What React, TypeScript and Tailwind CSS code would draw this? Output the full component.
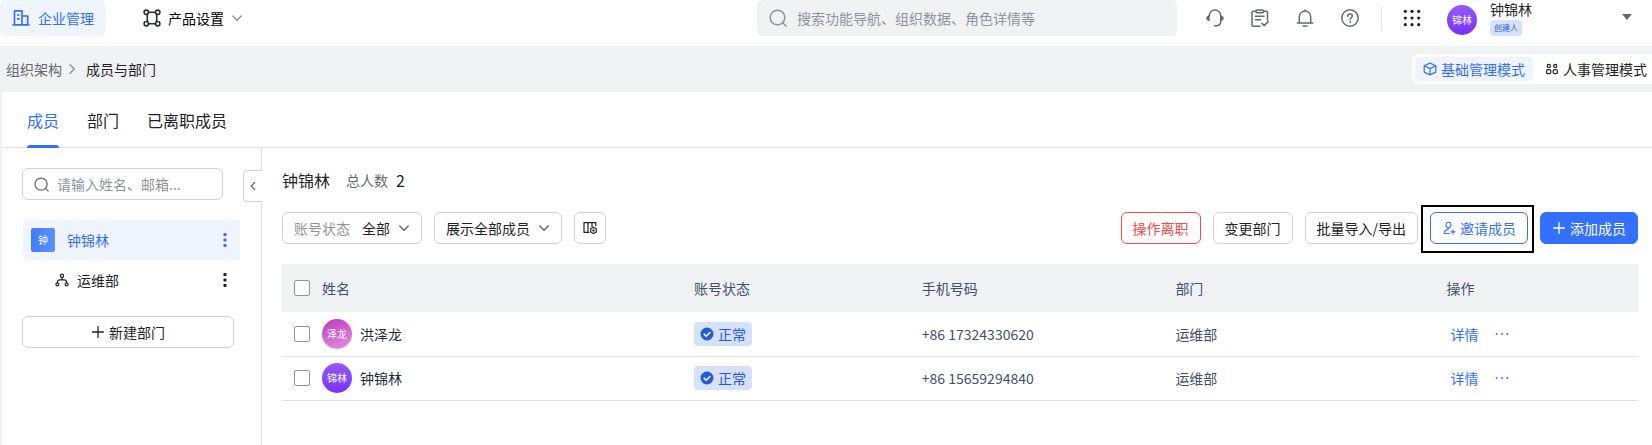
import React from "react";

type IconProps = { className?: string };

const Svg = ({ className, box = 18, width = 1.5, children }: IconProps & { box?: number; width?: number; children: React.ReactNode }) => (
  <svg
    aria-hidden="true"
    viewBox={`0 0 ${box} ${box}`}
    fill="none"
    stroke="currentColor"
    strokeWidth={width}
    strokeLinecap="round"
    strokeLinejoin="round"
    className={`shrink-0 ${className ?? ""}`}
  >
    {children}
  </svg>
);

const BuildingIcon = ({ className }: IconProps) => (
  <Svg className={className} width={1.7}>
    <path d="M.5 15.800h17M2.500 15.500V1.800h7.500v13.700M10 7h5.700v8.500M5 6h2.600M5 9.800h2.600" strokeLinecap="butt" />
  </Svg>
);
const ProductIcon = ({ className }: IconProps) => (
  <Svg className={className} width={1.6}>
    <circle cx="3.300" cy="3.300" r="2.200" />
    <circle cx="14.700" cy="3.300" r="2.200" />
    <circle cx="3.300" cy="14.700" r="2.200" />
    <circle cx="14.700" cy="14.700" r="2.200" />
    <path d="M5.500 3.300h7M5.500 14.700h7M4.300 5.400v7.200M13.700 5.400v7.200" />
  </Svg>
);
const SearchIcon = ({ className }: IconProps) => (
  <Svg className={className}>
    <circle cx="8.500" cy="8.500" r="7.300" />
    <path d="M13.700 13.700l3.300 3.300" />
  </Svg>
);
const ChevronDown = ({ className }: IconProps) => (
  <Svg className={className} box={12}>
    <path d="M1.800 4l4.200 4.200L10.200 4" />
  </Svg>
);
const HeadsetIcon = ({ className }: IconProps) => (
  <Svg className={className}>
    <path d="M3.200 7V6.800a5.800 5.800 0 0 1 11.600 0v5.400c0 2.600-1.600 4.200-4 4.500H8.600" />
    <path d="M3.200 6.800v5C1.600 11.600.7 10.600.7 9.300s.9-2.300 2.500-2.500zM14.800 6.800v5c1.600-.2 2.500-1.200 2.500-2.500s-.9-2.300-2.500-2.500z" fill="currentColor" strokeWidth=".8" />
  </Svg>
);
const ClipboardIcon = ({ className }: IconProps) => (
  <Svg className={className}>
    <path d="M5 2.200H2.500A1.500 1.500 0 0 0 1 3.700v12A1.500 1.500 0 0 0 2.500 17.200H9M12.500 2.200H15a1.500 1.500 0 0 1 1.500 1.500v7.500" />
    <rect x="5" y=".9" width="7.500" height="2.800" rx="1" />
    <path d="M4.500 7.300h8.500M4.500 10.700h5M11 14.400l2.200 2.200 4-4" />
  </Svg>
);
const BellIcon = ({ className }: IconProps) => (
  <Svg className={className}>
    <path d="M1.300 14h15.400M3.300 14V7.700a5.700 5.700 0 0 1 11.400 0V14M9 1.600V.9M7 17h4" />
  </Svg>
);
const HelpIcon = ({ className }: IconProps) => (
  <Svg className={className}>
    <circle cx="9" cy="9" r="8.200" />
    <path d="M6.700 7.200A2.300 2.300 0 0 1 9 5c1.300 0 2.300.9 2.300 2.100 0 1.600-2.200 1.700-2.200 3.400" />
    <circle cx="9.100" cy="12.900" r=".5" fill="currentColor" strokeWidth=".8" />
  </Svg>
);
const GridIcon = ({ className }: IconProps) => (
  <Svg className={className} width={0}>
    {[2.3, 9, 15.7].map((y) => [2.3, 9, 15.7].map((x) => <circle key={`${x}-${y}`} cx={x} cy={y} r="1.600" fill="currentColor" />))}
  </Svg>
);
const CubeIcon = ({ className }: IconProps) => (
  <Svg className={className} box={14} width={1.2}>
    <path d="M7 1.100l5.800 2.700v6.300L7 12.900 1.200 10.100V3.800zM1.200 3.800L7 6.600l5.800-2.800M7 6.600v6.300" />
  </Svg>
);
const PeopleIcon = ({ className }: IconProps) => (
  <Svg className={className} box={14} width={1.2}>
    <circle cx="3.800" cy="3.900" r="1.600" />
    <circle cx="10.200" cy="3.900" r="1.600" />
    <rect x="1.500" y="7.700" width="4.400" height="4" rx="1.700" />
    <rect x="8.100" y="7.700" width="4.400" height="4" rx="1.700" />
  </Svg>
);
const OrgIcon = ({ className }: IconProps) => (
  <Svg className={className} box={14} width={1.2}>
    <circle cx="7" cy="2.700" r="1.600" />
    <circle cx="2.400" cy="11.400" r="1.500" />
    <circle cx="11.600" cy="11.400" r="1.500" />
    <path d="M7 4.400v2.400M2.400 9.600c0-1.900.9-2.800 2.400-2.800h4.400c1.500 0 2.400.9 2.400 2.800" />
  </Svg>
);
const DotsVertical = ({ className }: IconProps) => (
  <Svg className={className} box={14} width={0}>
    {[0, 5.5, 11].map((y) => (
      <rect key={y} x="5.500" y={y} width="3" height="3" rx=".4" fill="currentColor" />
    ))}
  </Svg>
);
const DotsHorizontal = ({ className }: IconProps) => (
  <Svg className={className} box={14} width={0}>
    {[1.6, 7, 12.4].map((x) => (
      <circle key={x} cx={x} cy="7" r="1" fill="currentColor" />
    ))}
  </Svg>
);
const PlusIcon = ({ className }: IconProps) => (
  <Svg className={className} box={14} width={1.3}>
    <path d="M7 1.600v10.800M1.600 7h10.800" />
  </Svg>
);
const InviteIcon = ({ className }: IconProps) => (
  <Svg className={className} box={14} width={1.1}>
    <ellipse cx="6.500" cy="4" rx="2.500" ry="2.800" />
    <path d="M7.300 12.500H3c-.7 0-1-.5-.8-1.200.5-1.600 1.900-2.500 4.600-3.500M11 8.900v4M9 10.900h4" />
  </Svg>
);
const ColumnsIcon = ({ className }: IconProps) => (
  <Svg className={className} box={14} width={1.2}>
    <path d="M5.800 11.300H1V1.600h11.800v3.200M5 1.600v9.700M9 1.600v4" />
    <path d="M10.500 6.200l2.800 1.600v3.200l-2.800 1.600-2.800-1.600V7.800z" />
    <circle cx="10.500" cy="9.400" r=".6" />
  </Svg>
);
const CheckBadge = ({ className }: IconProps) => (
  <Svg className={className} box={14} width={1.6}>
    <circle cx="7" cy="7" r="6.500" fill="currentColor" stroke="none" />
    <path d="M4.200 7.200l2 2L9.900 5.500" stroke="#fff" />
  </Svg>
);

const btn = "flex h-8 items-center justify-center gap-1 whitespace-nowrap rounded-md border px-[11px]";
const checkbox = "block size-4 shrink-0 appearance-none rounded-xs border border-[#8f959e] bg-white checked:bg-[#3370ff]";

const members = [
  { name: "洪泽龙", short: "泽龙", phone: "+86 17324330620", dept: "运维部", color: "bg-linear-160 from-[#bd35bd] to-[#e68fe0]" },
  { name: "钟锦林", short: "锦林", phone: "+86 15659294840", dept: "运维部", color: "bg-linear-to-b from-[#935af6] to-[#7b2cff]" },
];

function TopBar() {
  return (
    <header className="flex h-[46px] items-start">
      <nav className="flex flex-1">
        <a href="#enterprise" className="flex h-9 items-center gap-2 rounded-md bg-[#f0f4ff] px-3 text-[#3370ff]">
          <BuildingIcon className="size-[18px]" />
          企业管理
        </a>
        <button type="button" className="ml-[37px] flex h-9 items-center gap-[7px] text-black">
          <ProductIcon className="size-[18px] text-[#2b2f36]" />
          产品设置
          <ChevronDown className="size-3 text-[#8f959e]" />
        </button>
      </nav>
      <label className="flex h-9 w-[420px] items-center gap-2.5 rounded-md bg-[#f1f2f4] px-3">
        <SearchIcon className="size-[18px] text-[#8f959e]" />
        <input
          type="search"
          aria-label="搜索"
          placeholder="搜索功能导航、组织数据、角色详情等"
          className="min-w-0 flex-1 bg-transparent outline-none placeholder:text-[#8f959e]"
        />
      </label>
      <div className="flex w-[475px] items-start pr-5 pl-[29px] text-[#646a73]">
        <div className="flex h-9 items-center gap-[27px]">
          <button type="button" aria-label="客服"><HeadsetIcon className="size-[18px]" /></button>
          <button type="button" aria-label="任务"><ClipboardIcon className="size-[18px]" /></button>
          <button type="button" aria-label="通知"><BellIcon className="size-[18px]" /></button>
          <button type="button" aria-label="帮助"><HelpIcon className="size-[18px]" /></button>
        </div>
        <div className="mt-1.5 ml-[22px] h-6 w-px bg-[#e4e6e9]" />
        <button type="button" aria-label="应用" className="ml-[21px] flex h-9 items-center text-[#1f2329]">
          <GridIcon className="size-[18px]" />
        </button>
        <button type="button" className="ml-[26px] flex flex-1 items-start text-left">
          <span className="mt-[5px] flex size-[30px] items-center justify-center rounded-full bg-linear-to-b from-[#935af6] to-[#7b2cff] text-[10px] text-white">锦林</span>
          <span className="ml-[13px] flex flex-col items-start">
            <span className="h-5 leading-[18px] text-[#1f2329]">钟锦林</span>
            <span className="flex h-4 items-center rounded-sm bg-[#d6e1ff] px-1 text-[8px] text-[#245bdb]">创建人</span>
          </span>
          <svg viewBox="0 0 10 6" aria-hidden="true" className="mt-3.5 ml-auto h-1.5 w-2.5 fill-[#646a73]"><path d="M0 0h10L5 6z" /></svg>
        </button>
      </div>
    </header>
  );
}

function Breadcrumb() {
  return (
    <div className="flex h-[46px] items-center justify-between bg-[#f1f2f4] pl-1.5">
      <nav aria-label="面包屑" className="flex items-center">
        <a href="#org" className="text-[#646a73]">组织架构</a>
        <ChevronDown className="mx-1 size-3 -rotate-90 text-[#8f959e]" />
        <span className="ml-1 text-[#1f2329]">成员与部门</span>
      </nav>
      <div className="flex items-center rounded-l-md bg-white p-[3px]">
        <button type="button" className="flex h-6 items-center gap-1 rounded-sm bg-[#f0f4ff] px-2 text-[#3370ff]">
          <CubeIcon className="size-3.5" />
          基础管理模式
        </button>
        <button type="button" className="flex h-6 items-center gap-1 pr-0.5 pl-3 text-[#1f2329]">
          <PeopleIcon className="size-3.5" />
          人事管理模式
        </button>
      </div>
    </div>
  );
}

function Sidebar() {
  return (
    <aside className="relative w-[260px] shrink-0 border-r border-[#dee0e3] pt-5 pl-5">
      <label className="flex h-8 w-[201px] items-center gap-2 rounded-md border border-[#d0d3d6] px-[11px]">
        <SearchIcon className="size-[15px] text-[#646a73]" />
        <input
          type="search"
          aria-label="搜索成员"
          placeholder="请输入姓名、邮箱..."
          className="min-w-0 flex-1 bg-transparent outline-none placeholder:text-[#8f959e]"
        />
      </label>
      <ul className="mt-5 mr-[21px] ml-px">
        <li className="flex h-10 items-center bg-[#f0f4ff] px-2 text-[#3370ff]">
          <span className="flex size-6 items-center justify-center rounded-xs bg-linear-to-r from-[#3f7bff] to-[#5d92ff] text-[10px] text-white">钟</span>
          <span className="ml-3">钟锦林</span>
          <button type="button" aria-label="更多" className="ml-auto"><DotsVertical className="size-3.5" /></button>
        </li>
        <li className="flex h-10 items-center pr-2 pl-8 text-[#1f2329]">
          <OrgIcon className="size-3.5" />
          <span className="ml-2">运维部</span>
          <button type="button" aria-label="更多" className="ml-auto"><DotsVertical className="size-3.5" /></button>
        </li>
      </ul>
      <button type="button" className="mt-4 flex h-8 w-[212px] items-center justify-center gap-1 rounded-md border border-[#d0d3d6] text-[#1f2329]">
        <PlusIcon className="size-3.5" />
        新建部门
      </button>
      <button
        type="button"
        aria-label="收起"
        className="absolute top-[22px] -right-px flex h-8 w-[19px] items-center justify-center rounded-l-sm border border-r-0 border-[#d0d3d6] bg-white text-[#646a73]"
      >
        <ChevronDown className="size-2.5 rotate-90" />
      </button>
    </aside>
  );
}

function Toolbar() {
  return (
    <div className="mt-5 flex items-center justify-between text-[#1f2329]">
      <div className="flex gap-3">
        <button type="button" className={`${btn} border-[#d0d3d6]`}>
          <span className="text-[#8f959e]">账号状态</span>
          <span className="ml-2">全部</span>
          <ChevronDown className="ml-1 size-3 text-[#646a73]" />
        </button>
        <button type="button" className={`${btn} border-[#d0d3d6]`}>
          展示全部成员
          <ChevronDown className="ml-1 size-3 text-[#646a73]" />
        </button>
        <button type="button" aria-label="列设置" className="flex size-8 items-center justify-center rounded-md border border-[#d0d3d6]">
          <ColumnsIcon className="size-3.5" />
        </button>
      </div>
      <div className="flex gap-3">
        <button type="button" className={`${btn} border-[#f54a45] text-[#f54a45]`}>操作离职</button>
        <button type="button" className={`${btn} border-[#d0d3d6]`}>变更部门</button>
        <button type="button" className={`${btn} border-[#d0d3d6]`}>批量导入/导出</button>
        <div className="relative">
          <button type="button" className={`${btn} border-[#3370ff] text-[#3370ff]`}>
            <InviteIcon className="size-3.5" />
            邀请成员
          </button>
          <span className="pointer-events-none absolute -top-[7px] -right-1.5 -bottom-[9px] -left-[9px] border-2 border-black" />
        </div>
        <button type="button" className={`${btn} border-[#3370ff] bg-[#3370ff] text-white`}>
          <PlusIcon className="size-3.5" />
          添加成员
        </button>
      </div>
    </div>
  );
}

function MemberTable() {
  return (
    <table className="mt-5 w-full table-fixed text-left text-[#42516b]">
      <colgroup>
        <col className="w-[29.5%]" />
        <col className="w-[16.8%]" />
        <col className="w-[18.7%]" />
        <col className="w-[20%]" />
        <col />
      </colgroup>
      <thead>
        <tr className="h-12 bg-[#f1f2f4]">
          <th className="px-3 font-normal">
            <label className="flex items-center gap-3">
              <input type="checkbox" className={checkbox} />
              姓名
            </label>
          </th>
          <th className="px-3 font-normal">账号状态</th>
          <th className="px-3 font-normal">手机号码</th>
          <th className="px-3 font-normal">部门</th>
          <th className="px-3 font-normal">操作</th>
        </tr>
      </thead>
      <tbody>
        {members.map((m) => (
          <tr key={m.phone} className="h-11 border-b border-[#dee0e3]">
            <td className="px-3">
              <label className="flex items-center text-[#1c2a44]">
                <input type="checkbox" className={checkbox} />
                <span className={`ml-3 flex size-[30px] items-center justify-center rounded-full text-[10px] text-white ${m.color}`}>{m.short}</span>
                <span className="ml-2">{m.name}</span>
              </label>
            </td>
            <td className="px-3">
              <span className="flex h-6 w-fit items-center gap-1 rounded-sm bg-[#d6e1ff] px-1.5 text-[#245bdb]">
                <CheckBadge className="size-3.5" />
                正常
              </span>
            </td>
            <td className="px-3">{m.phone}</td>
            <td className="px-3">{m.dept}</td>
            <td className="px-4">
              <div className="flex items-center gap-4 text-[#3370ff]">
                <a href="#detail">详情</a>
                <button type="button" aria-label="更多操作"><DotsHorizontal className="size-3.5" /></button>
              </div>
            </td>
          </tr>
        ))}
      </tbody>
    </table>
  );
}

export default function App() {
  return (
    <div className="flex min-h-screen flex-col bg-white font-['Noto_Sans_CJK_SC',sans-serif] text-sm text-[#1f2329]">
      <TopBar />
      <Breadcrumb />
      <main className="flex flex-1 flex-col border-l-2 border-[#f1f2f4]">
        <div className="flex h-14 gap-7 border-b border-[#dee0e3] pl-[25px] text-base">
          <button type="button" className="relative text-[#3370ff]">
            成员
            <span className="absolute inset-x-0 -bottom-px h-[3px] rounded-t-sm bg-[#3370ff]" />
          </button>
          <button type="button">部门</button>
          <button type="button">已离职成员</button>
        </div>
        <div className="flex flex-1">
          <Sidebar />
          <section className="min-w-0 flex-1 pt-5 pr-3.5 pl-5">
            <div className="flex items-center">
              <h1 className="text-base">钟锦林</h1>
              <span className="ml-4 text-[#646a73]">总人数</span>
              <span className="ml-2 text-base">2</span>
            </div>
            <Toolbar />
            <MemberTable />
          </section>
        </div>
      </main>
    </div>
  );
}
